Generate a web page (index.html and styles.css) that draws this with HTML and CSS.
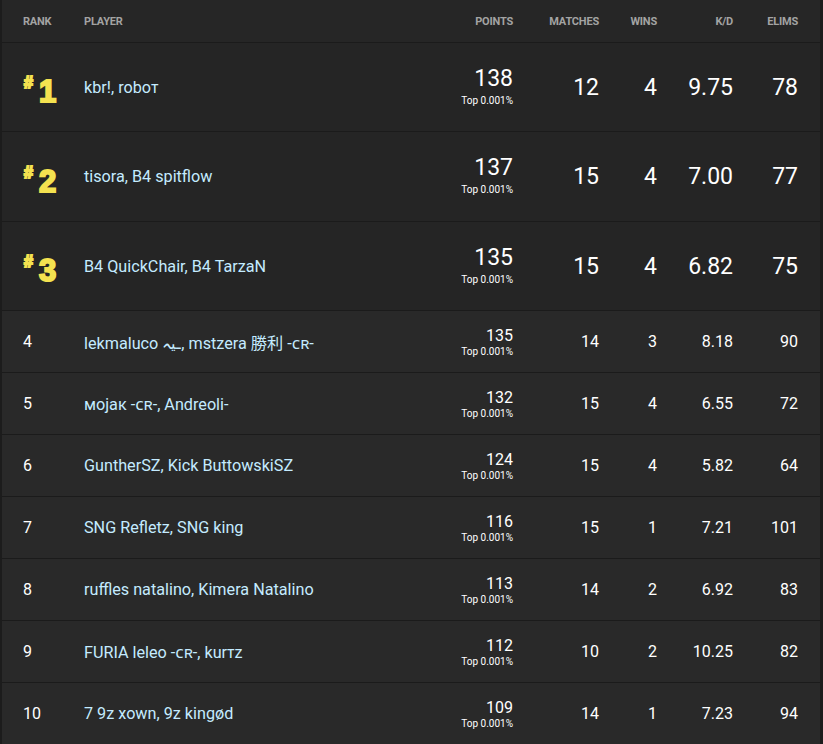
FILE: index.html
```html
<!DOCTYPE html>
<html>
<head>
<meta charset="utf-8">
<link rel="stylesheet" href="styles.css">
</head>
<body>
<div class="board">
  <div class="row head">
    <div class="c-rank">Rank</div>
    <div class="c-player">Player</div>
    <div class="c-num">Points</div>
    <div class="c-num">Matches</div>
    <div class="c-num">Wins</div>
    <div class="c-num">K/D</div>
    <div class="c-num">Elims</div>
  </div>

  <div class="row top">
    <div class="c-rank"><span class="medal"><span class="hash">#</span>1</span></div>
    <div class="c-player">kbr!, roboᴛ</div>
    <div class="c-num pts"><span class="pv">138</span><span class="pt">Top 0.001%</span></div>
    <div class="c-num">12</div>
    <div class="c-num">4</div>
    <div class="c-num">9.75</div>
    <div class="c-num">78</div>
  </div>
  <div class="row top mid">
    <div class="c-rank"><span class="medal"><span class="hash">#</span>2</span></div>
    <div class="c-player">tisora, B4 spitflow</div>
    <div class="c-num pts"><span class="pv">137</span><span class="pt">Top 0.001%</span></div>
    <div class="c-num">15</div>
    <div class="c-num">4</div>
    <div class="c-num">7.00</div>
    <div class="c-num">77</div>
  </div>
  <div class="row top">
    <div class="c-rank"><span class="medal"><span class="hash">#</span>3</span></div>
    <div class="c-player">B4 QuickChair, B4 TarzaN</div>
    <div class="c-num pts"><span class="pv">135</span><span class="pt">Top 0.001%</span></div>
    <div class="c-num">15</div>
    <div class="c-num">4</div>
    <div class="c-num">6.82</div>
    <div class="c-num">75</div>
  </div>

  <div class="row">
    <div class="c-rank">4</div>
    <div class="c-player">lekmaluco ـيہ, mstzera 勝利 -ᴄʀ-</div>
    <div class="c-num pts"><span class="pv">135</span><span class="pt">Top 0.001%</span></div>
    <div class="c-num">14</div>
    <div class="c-num">3</div>
    <div class="c-num">8.18</div>
    <div class="c-num">90</div>
  </div>
  <div class="row">
    <div class="c-rank">5</div>
    <div class="c-player">мojaк -ᴄʀ-, Andreoli-</div>
    <div class="c-num pts"><span class="pv">132</span><span class="pt">Top 0.001%</span></div>
    <div class="c-num">15</div>
    <div class="c-num">4</div>
    <div class="c-num">6.55</div>
    <div class="c-num">72</div>
  </div>
  <div class="row">
    <div class="c-rank">6</div>
    <div class="c-player">GuntherSZ, Kick ButtowskiSZ</div>
    <div class="c-num pts"><span class="pv">124</span><span class="pt">Top 0.001%</span></div>
    <div class="c-num">15</div>
    <div class="c-num">4</div>
    <div class="c-num">5.82</div>
    <div class="c-num">64</div>
  </div>
  <div class="row">
    <div class="c-rank">7</div>
    <div class="c-player">SNG Refletz, SNG king</div>
    <div class="c-num pts"><span class="pv">116</span><span class="pt">Top 0.001%</span></div>
    <div class="c-num">15</div>
    <div class="c-num">1</div>
    <div class="c-num">7.21</div>
    <div class="c-num">101</div>
  </div>
  <div class="row">
    <div class="c-rank">8</div>
    <div class="c-player">ruffles natalino, Kimera Natalino</div>
    <div class="c-num pts"><span class="pv">113</span><span class="pt">Top 0.001%</span></div>
    <div class="c-num">14</div>
    <div class="c-num">2</div>
    <div class="c-num">6.92</div>
    <div class="c-num">83</div>
  </div>
  <div class="row">
    <div class="c-rank">9</div>
    <div class="c-player">FURIA leleo -ᴄʀ-, kurᴛz</div>
    <div class="c-num pts"><span class="pv">112</span><span class="pt">Top 0.001%</span></div>
    <div class="c-num">10</div>
    <div class="c-num">2</div>
    <div class="c-num">10.25</div>
    <div class="c-num">82</div>
  </div>
  <div class="row">
    <div class="c-rank">10</div>
    <div class="c-player">7 9z xown, 9z kingød</div>
    <div class="c-num pts"><span class="pv">109</span><span class="pt">Top 0.001%</span></div>
    <div class="c-num">14</div>
    <div class="c-num">1</div>
    <div class="c-num">7.23</div>
    <div class="c-num">94</div>
  </div>
</div>
</body>
</html>
```

FILE: styles.css
```css
html, body {
  margin: 0;
  padding: 0;
  background: #1d1d1d;
}
body {
  font-family: Roboto, "Noto Sans", "Noto Sans CJK JP", sans-serif;
  color: #ffffff;
  width: 823px;
  height: 744px;
  overflow: hidden;
}
.board {
  width: 823px;
  box-sizing: border-box;
  border-left: 2px solid #1c1c1c;
  border-right: 3px solid #1c1c1c;
  background: #282828;
}
.row {
  display: grid;
  grid-template-columns: 61px 329px 100px 86px 58px 76px 65px;
  padding: 0 22px 0 21px;
  height: 61px;
  align-items: center;
  border-bottom: 1px solid #1b1b1b;
  background: #292929;
  font-size: 16px;
}
.row.head {
  height: 42px;
  background: #262626;
  font-size: 11px;
  font-weight: 700;
  color: #a3a3a3;
  text-transform: uppercase;
  letter-spacing: -0.2px;
}
.row.top {
  height: 88px;
  background: #252525;
  font-size: 23px;
}
.row.top.mid {
  height: 89px;
}
.c-rank {
  color: #ffffff;
}
.c-player {
  color: #c4ebff;
  font-size: 16.2px;
  white-space: nowrap;
}
.head .c-rank, .head .c-player {
  color: #a3a3a3;
  font-size: 11px;
}
.c-num {
  text-align: right;
}
.pts {
  display: flex;
  flex-direction: column;
  align-items: flex-end;
}
.pt {
  font-size: 10px;
  line-height: 12px;
  margin-top: 1px;
}
.pv {
  line-height: 19px;
}
.top .pv {
  line-height: 26px;
}
.top .pt {
  margin-top: 3px;
}
.top .pts {
  padding-bottom: 2px;
}
.medal {
  display: inline-flex;
  align-items: flex-start;
  color: #f4e250;
  font-family: "Liberation Sans", Arial, sans-serif;
  font-weight: 900;
  font-size: 31px;
  line-height: 31px;
  -webkit-text-stroke: 2px #f4e250;
  margin-top: 2px;
}
.hash {
  font-size: 16px;
  line-height: 16px;
  margin-right: 6px;
  margin-left: 1px;
  -webkit-text-stroke: 1.8px #f4e250;
  margin-top: -1px;
}
```
